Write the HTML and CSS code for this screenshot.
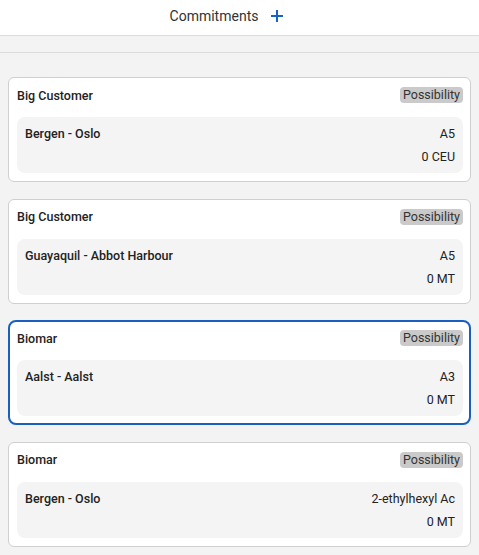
FILE: index.html
```html
<!DOCTYPE html>
<html lang="en">
<head>
    <meta charset="UTF-8">
    <meta name="viewport" content="width=device-width, initial-scale=1.0">
    <title>Commitments</title>
    <link rel="stylesheet" href="styles.css">
</head>
<body>
    <header class="top-bar">
        <span class="top-title">Commitments</span>
        <button class="add-btn" type="button" aria-label="Add commitment">
            <svg width="14" height="14" viewBox="0 0 14 14">
                <path d="M7 1v12M1 7h12" stroke="#1565c0" stroke-width="2" fill="none"/>
            </svg>
        </button>
    </header>

    <div class="toolbar"></div>

    <main class="list">
        <div class="card">
            <div class="card-head">
                <span class="customer">Big Customer</span>
                <span class="badge">Possibility</span>
            </div>
            <div class="detail">
                <div class="row">
                    <span class="route">Bergen - Oslo</span>
                    <span>A5</span>
                </div>
                <div class="row">
                    <span></span>
                    <span>0 CEU</span>
                </div>
            </div>
        </div>

        <div class="card">
            <div class="card-head">
                <span class="customer">Big Customer</span>
                <span class="badge">Possibility</span>
            </div>
            <div class="detail">
                <div class="row">
                    <span class="route">Guayaquil - Abbot Harbour</span>
                    <span>A5</span>
                </div>
                <div class="row">
                    <span></span>
                    <span>0 MT</span>
                </div>
            </div>
        </div>

        <div class="card selected">
            <div class="card-head">
                <span class="customer">Biomar</span>
                <span class="badge">Possibility</span>
            </div>
            <div class="detail">
                <div class="row">
                    <span class="route">Aalst - Aalst</span>
                    <span>A3</span>
                </div>
                <div class="row">
                    <span></span>
                    <span>0 MT</span>
                </div>
            </div>
        </div>

        <div class="card">
            <div class="card-head">
                <span class="customer">Biomar</span>
                <span class="badge">Possibility</span>
            </div>
            <div class="detail">
                <div class="row">
                    <span class="route">Bergen - Oslo</span>
                    <span>2-ethylhexyl Ac</span>
                </div>
                <div class="row">
                    <span></span>
                    <span>0 MT</span>
                </div>
            </div>
        </div>
    </main>
</body>
</html>
```

FILE: styles.css
```css
body {
    font-family: Roboto, "Liberation Sans", sans-serif;
    background-color: #f3f3f3;
    color: #222;
    margin: 0;
    font-size: 12.5px;
}

.top-bar {
    height: 36px;
    box-sizing: border-box;
    padding: 0 25px 3px 0;
    background: #fff;
    border-bottom: 1px solid #dcdcdc;
    display: flex;
    align-items: center;
    justify-content: center;
    gap: 12px;
}

.top-title {
    font-size: 14px;
    color: #333;
}

.add-btn {
    border: none;
    background: none;
    padding: 0;
    display: flex;
    cursor: pointer;
}

.toolbar {
    height: 16px;
    border-bottom: 1px solid #dcdcdc;
}

.list {
    display: flex;
    flex-direction: column;
    gap: 16.5px;
    padding: 24px 8px;
}

.card {
    background: #fff;
    border: 1px solid #cfcfcf;
    border-radius: 6px;
    padding: 8px 7px 8px 8px;
}

.card.selected {
    border: 2px solid #1a5fc0;
    border-radius: 8px;
    padding: 7px 6px 7px 7px;
}

.card-head {
    display: flex;
    justify-content: space-between;
    align-items: center;
    height: 18px;
    margin-bottom: 13px;
}

.customer {
    font-weight: 500;
}

.badge {
    background: #cacaca;
    border-radius: 4px;
    padding: 1px 3px;
    line-height: 14px;
    color: #333;
}

.detail {
    background: #f4f4f4;
    border-radius: 8px;
    padding: 9px 8px 8px;
    display: flex;
    flex-direction: column;
    gap: 7px;
}

.row {
    display: flex;
    justify-content: space-between;
    line-height: 16px;
}

.route {
    font-weight: 500;
}
```
